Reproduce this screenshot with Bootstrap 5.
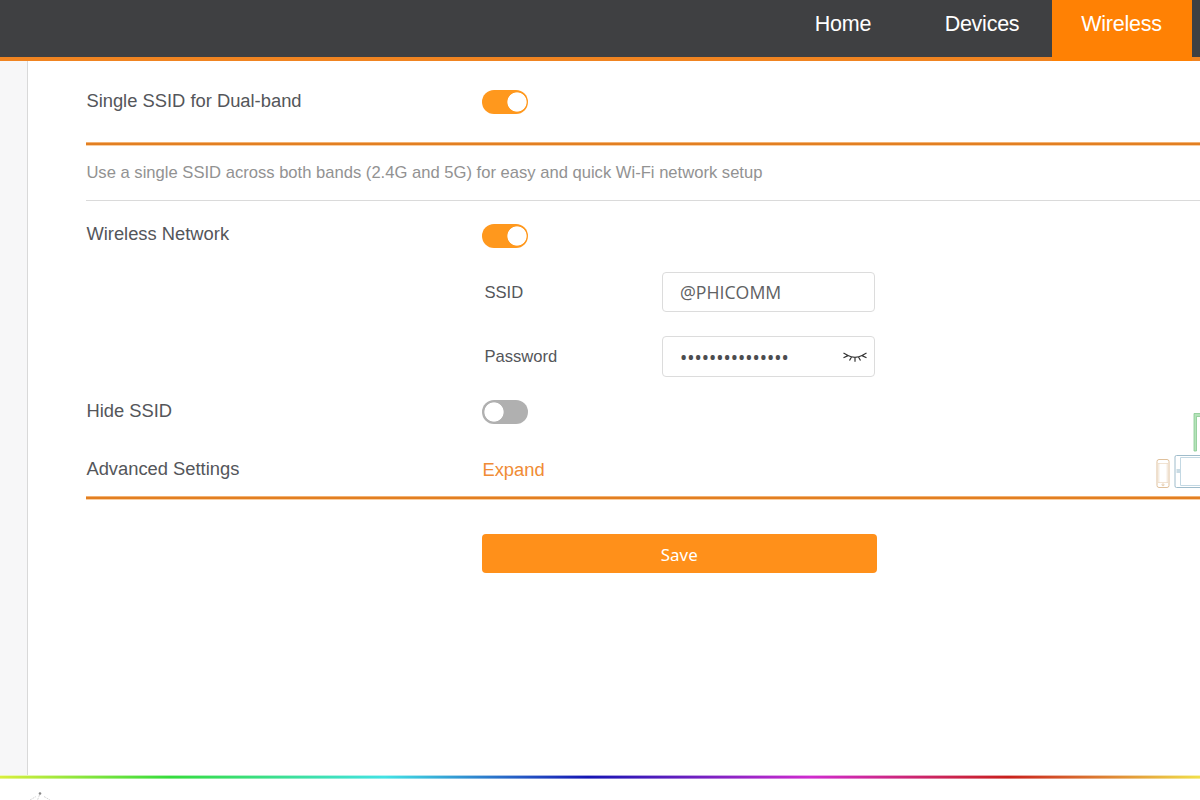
<!DOCTYPE html>
<html lang="en">
<head>
<meta charset="utf-8">
<meta name="viewport" content="width=device-width, initial-scale=1">
<title>Wireless</title>
<link href="https://cdn.jsdelivr.net/npm/bootstrap@5.3.0/dist/css/bootstrap.min.css" rel="stylesheet">
<style>
body{font-family:"Liberation Sans",Arial,sans-serif;font-size:18.35px;color:#54565a;height:800px;overflow:hidden;background:#fff}
.topbar{height:61px;background:#3f4042;border-bottom:4px solid #f08421;flex:none}
.topbar .nav-link{height:61px;width:139px;padding:9px 1px 0 0;color:#fff;font-size:21.5px;letter-spacing:-.25px;line-height:31px;text-align:center}
.topbar .nav-link.active{background:#ff8104;width:140px}
.topbar .tail{width:8px}
.side{width:28px;background:#f7f7f8;border-right:1px solid #d9d9d9;flex:none}
.settings{padding-left:58px}
.line{display:flex;align-items:center}
.caption{width:396px;flex:none;line-height:24px;padding:0 0 1px .4px}
.rule{border-bottom:2px solid #e27f22;box-shadow:0 1px 0 #f9cfa3,inset 0 -1px 0 #f3b272}
.h-dual{height:84px}
.h-dual .caption{padding-bottom:3px}
.hint{height:56px;padding:1px 0 0 .4px;font-size:16.6px;color:#929292;border-bottom:1px solid #dadada}
.h-net{height:67px}.h-ssid{height:48px}.h-pass{height:81px}.h-hide{height:29px}
.h-adv{height:73px;padding:17px 0 1px}
.sub{width:178px;margin-left:398px;padding:2px 0 0 .4px;font-size:16.6px;flex:none}
.h-ssid .sub{padding-top:3px}
.form-switch.toggle{padding:0;margin:2px 0 0;min-height:0;line-height:0}
.h-hide .toggle,.h-dual .toggle{margin-top:0}
.toggle .form-check-input{width:46px;height:24px;margin:0;float:none;border:0;background-color:#b0b0b0;
 background-image:radial-gradient(circle at 12px 12px,#fff 9.2px,transparent 10px)!important;background-size:100% 100%;background-position:0 0!important}
.toggle .form-check-input:checked{background-color:#ff981d;background-image:radial-gradient(circle at 35px 12px,#fff 9.2px,transparent 10px)!important}
.field{width:213px;height:41px;border:1px solid #dcdcdc;border-radius:4px;padding:0 7px 0 17px;color:#606163;font-family:"Open Sans","Noto Sans",sans-serif;font-size:17.7px}
.h-ssid .field{height:40px}
.dots{font-family:"Noto Sans",sans-serif;font-size:19.3px;padding-top:3px;color:#4c4d4f}
.expand{color:#f08c35;text-decoration:none;padding-left:.4px}
.save{width:395.5px;height:39px;margin:35px 0 0 395.5px;padding:2px 0 0;border:0;border-radius:4px;background:#ff901a;color:#fff;font:16.9px/24px "Noto Sans",sans-serif}
.rainbow{height:4px;flex:none;background:linear-gradient(#fff9 1px,transparent 1px 3px,#fff6 3px),linear-gradient(90deg,#d9ee3c 0,#35dc3c 170px,#42e2e4 385px,#1515b4 588px,#cf2bcf 810px,#c9201c 1008px,#f1e04a 1200px)}
.foot{height:21px;flex:none}
.devices{position:absolute;right:0;top:408px}
</style>
</head>
<body class="d-flex flex-column">
<nav class="topbar d-flex justify-content-end">
  <a class="nav-link" href="#">Home</a>
  <a class="nav-link" href="#">Devices</a>
  <a class="nav-link active" href="#">Wireless</a>
  <span class="tail"></span>
</nav>
<div class="d-flex flex-grow-1">
  <aside class="side"></aside>
  <main class="settings flex-grow-1">
    <div class="line rule h-dual">
      <span class="caption">Single SSID for Dual-band</span>
      <div class="form-check form-switch toggle"><input class="form-check-input" type="checkbox" role="switch" aria-label="Single SSID" checked></div>
    </div>
    <div class="line hint">Use a single SSID across both bands (2.4G and 5G) for easy and quick Wi-Fi network setup</div>
    <div class="line h-net">
      <span class="caption">Wireless Network</span>
      <div class="form-check form-switch toggle"><input class="form-check-input" type="checkbox" role="switch" aria-label="Wireless network" checked></div>
    </div>
    <div class="line h-ssid">
      <span class="sub">SSID</span>
      <div class="field d-flex align-items-center">@PHICOMM</div>
    </div>
    <div class="line h-pass">
      <span class="sub">Password</span>
      <div class="field d-flex align-items-center justify-content-between">
        <span class="dots">•••••••••••••••</span>
        <svg width="24" height="12" viewBox="0 0 24 12" fill="none" stroke="#333" stroke-width="1.2"><path d="M.5 2L5 4.600C9 6.900 15 6.900 19 4.600L23.500 2M.5 6.800L5 4.600M6.500 9.500L8.500 6M12 10.800V6.300M17.500 9.500L15.500 6M23.500 6.800L19 4.600"/></svg>
      </div>
    </div>
    <div class="line h-hide">
      <span class="caption">Hide SSID</span>
      <div class="form-check form-switch toggle"><input class="form-check-input" type="checkbox" role="switch" aria-label="Hide SSID"></div>
    </div>
    <div class="line rule h-adv">
      <span class="caption">Advanced Settings</span>
      <a class="expand" href="#">Expand</a>
    </div>
    <button class="btn save d-block" type="button">Save</button>
  </main>
</div>
<div class="rainbow"></div>
<footer class="foot">
  <svg class="d-block" width="60" height="21" fill="none" stroke="#d5d5d5"><circle cx="40" cy="14.500" r="1.300" fill="#888" stroke="none"/><path d="M39.500 16L37.500 21M30 21L36 17.500M44 17.500L50 21" stroke-dasharray="2 1"/></svg>
</footer>
<svg class="devices" width="46" height="84" viewBox="1154 408 46 84" fill="none">
  <path d="M1200 413.500H1194V451H1196.500V416.500H1200" fill="#b5e3b9" stroke="#86c990" stroke-width=".8"/>
  <rect x="1157" y="459.500" width="12" height="28" rx="2" stroke="#dfc09c"/>
  <path d="M1158 463.500H1168M1158 482.500H1168M1158.800 463V483M1167.200 463V483" stroke="#eddcc8" stroke-width=".8"/>
  <circle cx="1163" cy="484.800" r="1" stroke="#dfc09c" stroke-width=".8"/>
  <path d="M1200 455.500H1176.500Q1175 455.500 1175 457V486Q1175 487.500 1176.500 487.500H1200" stroke="#9fbccb"/>
  <path d="M1200 457.500H1180.500V485.500H1200" stroke="#c3d8e3"/>
  <rect x="1176.500" y="469" width="3.500" height="4" fill="#c9dbe4"/>
</svg>
<script src="https://cdn.jsdelivr.net/npm/bootstrap@5.3.0/dist/js/bootstrap.bundle.min.js"></script>
</body>
</html>
